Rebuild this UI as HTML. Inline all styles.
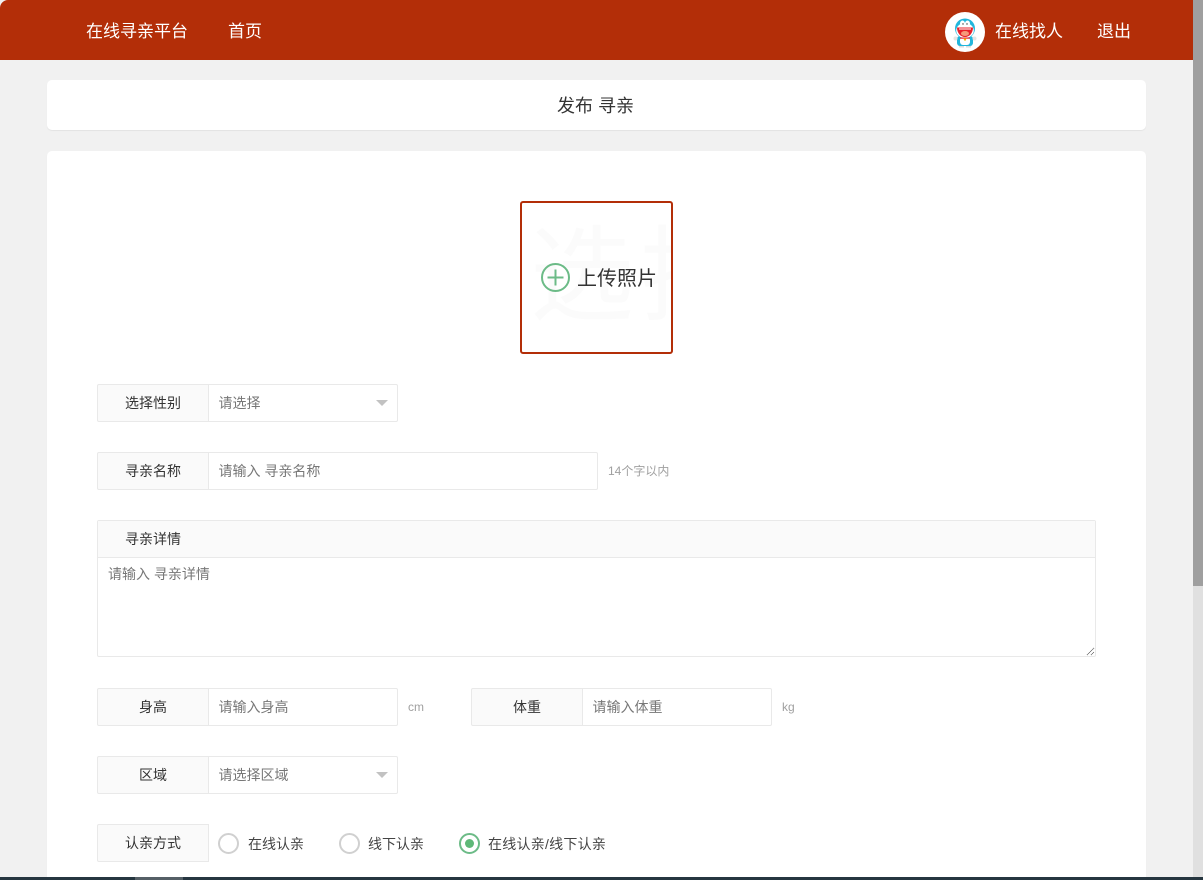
<!DOCTYPE html>
<html lang="zh">
<head>
<meta charset="utf-8">
<style>
html,body{margin:0;padding:0;width:1203px;height:880px;overflow:hidden;background:#f1f1f1;}
body{position:relative;font-family:"Liberation Sans","Noto Sans CJK SC",sans-serif;color:#333;font-size:14px;}
div,span{position:absolute;box-sizing:border-box;white-space:nowrap;}
.nav{color:#fff;font-size:17px;line-height:24px;top:20px;}
.card{background:#fff;border-radius:5px;box-shadow:0 1px 1px rgba(0,0,0,.06);}
.label{background:#fafafa;border:1px solid #e9e9e9;border-radius:2px 0 0 2px;height:38px;width:112px;line-height:37px;text-align:center;font-size:14px;color:#333;}
.input{background:#fff;border:1px solid #e9e9e9;border-left:0;border-radius:0 2px 2px 0;height:38px;line-height:37px;padding-left:9.500px;font-size:14px;color:#777;}
.aux{font-size:12px;color:#a0a0a0;line-height:18px;}
.arrow{width:0;height:0;border-left:6px solid transparent;border-right:6px solid transparent;border-top:6px solid #c2c2c2;}
.radio{width:21px;height:21px;border:2px solid #d0d0d0;border-radius:50%;}
.rt{font-size:14px;color:#444;line-height:20px;}
</style>
</head>
<body>
<div style="left:0;top:0;width:1193px;height:60px;background:#b32e08;border-top-left-radius:8px;"></div>
<div class="nav" style="left:86px;">在线寻亲平台</div>
<div class="nav" style="left:228px;">首页</div>
<div style="left:945px;top:12px;width:40px;height:40px;background:#fff;border-radius:50%;"></div>
<svg style="position:absolute;left:945px;top:12px;" width="40" height="40" viewBox="0 0 40 40">
<rect x="12" y="24" width="16" height="10" rx="3" fill="#21b6dc"/>
<rect x="15" y="25" width="10" height="8" rx="3" fill="#fff"/>
<circle cx="10.500" cy="26.500" r="2" fill="#e4e4e4"/><circle cx="29.500" cy="26.500" r="2" fill="#e4e4e4"/>
<ellipse cx="20" cy="16.500" rx="10" ry="10" fill="#21b6dc"/>
<ellipse cx="20" cy="18.500" rx="8.800" ry="7.500" fill="#fff"/>
<ellipse cx="17.500" cy="11.500" rx="2.500" ry="3" fill="#fff"/>
<ellipse cx="22.500" cy="11.500" rx="2.500" ry="3" fill="#fff"/>
<circle cx="18" cy="12" r=".7" fill="#333"/><circle cx="22" cy="12" r=".7" fill="#333"/>
<path d="M12 15.500h16c0 5.500-3.500 9.500-8 9.500s-8-4-8-9.500z" fill="#e8202a"/>
<path d="M14 16.500h12v1H14z" fill="#fff"/>
<ellipse cx="20" cy="21.500" rx="4" ry="2.500" fill="#f59a7a"/>
<rect x="15" y="25.500" width="10" height="1.200" fill="#e8202a"/>
<circle cx="20" cy="27.500" r="1.200" fill="#f5b800"/>
<rect x="14" y="34" width="5" height="1.500" fill="#ddd"/><rect x="21" y="34" width="5" height="1.500" fill="#ddd"/>
</svg>
<div class="nav" style="left:995px;">在线找人</div>
<div class="nav" style="left:1097px;">退出</div>

<div class="card" style="left:47px;top:80px;width:1099px;height:50px;"></div>
<div style="left:557px;top:80px;font-size:18px;line-height:53px;color:#333;">发布 寻亲</div>
<div class="card" style="left:47px;top:151px;width:1099px;height:760px;"></div>

<div style="left:520px;top:201px;width:153px;height:153px;border:2px solid #b32e08;border-radius:3px;background:#fff;overflow:hidden;">
  <span style="left:8px;top:2px;font-size:104px;line-height:144px;letter-spacing:6px;color:#fbfbfb;">选择</span>
</div>
<svg style="position:absolute;left:540px;top:262px;" width="31" height="31" viewBox="0 0 31 31">
<circle cx="15.500" cy="15.500" r="13.500" fill="none" stroke="#6cbb87" stroke-width="2"/>
<path d="M15.500 7.500v16M7.500 15.500h16" stroke="#6cbb87" stroke-width="2" fill="none"/>
</svg>
<div style="left:577px;top:265px;font-size:20px;line-height:28px;color:#333;">上传照片</div>

<div class="label" style="left:97px;top:384px;">选择性别</div>
<div class="input" style="left:209px;top:384px;width:189px;">请选择</div>
<div class="arrow" style="left:376px;top:400px;"></div>

<div class="label" style="left:97px;top:452px;">寻亲名称</div>
<div class="input" style="left:209px;top:452px;width:389px;">请输入 寻亲名称</div>
<div class="aux" style="left:608px;top:462px;">14个字以内</div>

<div style="left:97px;top:520px;width:999px;height:137px;border:1px solid #e9e9e9;border-radius:2px;background:#fff;"></div>
<div style="left:98px;top:521px;width:997px;height:37px;background:#fafafa;border-bottom:1px solid #e9e9e9;"></div>
<div style="left:125px;top:521px;font-size:14px;line-height:37px;color:#333;">寻亲详情</div>
<div style="left:108px;top:564px;font-size:14px;line-height:20px;color:#777;">请输入 寻亲详情</div>
<svg style="position:absolute;left:1086px;top:647px;" width="9" height="9" viewBox="0 0 9 9"><path d="M1 8L8 1M5 8L8 5" stroke="#666" stroke-width="1" stroke-dasharray="1 .5" fill="none"/></svg>

<div class="label" style="left:97px;top:688px;">身高</div>
<div class="input" style="left:209px;top:688px;width:189px;">请输入身高</div>
<div class="aux" style="left:408px;top:698px;">cm</div>
<div class="label" style="left:471px;top:688px;">体重</div>
<div class="input" style="left:583px;top:688px;width:189px;">请输入体重</div>
<div class="aux" style="left:782px;top:698px;">kg</div>

<div class="label" style="left:97px;top:756px;">区域</div>
<div class="input" style="left:209px;top:756px;width:189px;">请选择区域</div>
<div class="arrow" style="left:376px;top:772px;"></div>

<div class="label" style="left:97px;top:824px;">认亲方式</div>
<div class="radio" style="left:218px;top:833px;"></div>
<div class="rt" style="left:248px;top:834px;">在线认亲</div>
<div class="radio" style="left:339px;top:833px;"></div>
<div class="rt" style="left:368px;top:834px;">线下认亲</div>
<div class="radio" style="left:459px;top:833px;border-color:#6cbb87;"></div>
<div style="left:465px;top:839px;width:9px;height:9px;background:#5fb878;border-radius:50%;"></div>
<div class="rt" style="left:488px;top:834px;letter-spacing:.25px;">在线认亲/线下认亲</div>

<div style="left:1193px;top:0;width:10px;height:880px;background:#e0e0e0;"></div>
<div style="left:1193px;top:0;width:10px;height:586px;background:#9f9f9f;"></div>
<div style="left:0;top:877px;width:1203px;height:3px;background:#263640;"></div>
<div style="left:135px;top:877px;width:48px;height:3px;background:#555f66;"></div>
</body>
</html>
